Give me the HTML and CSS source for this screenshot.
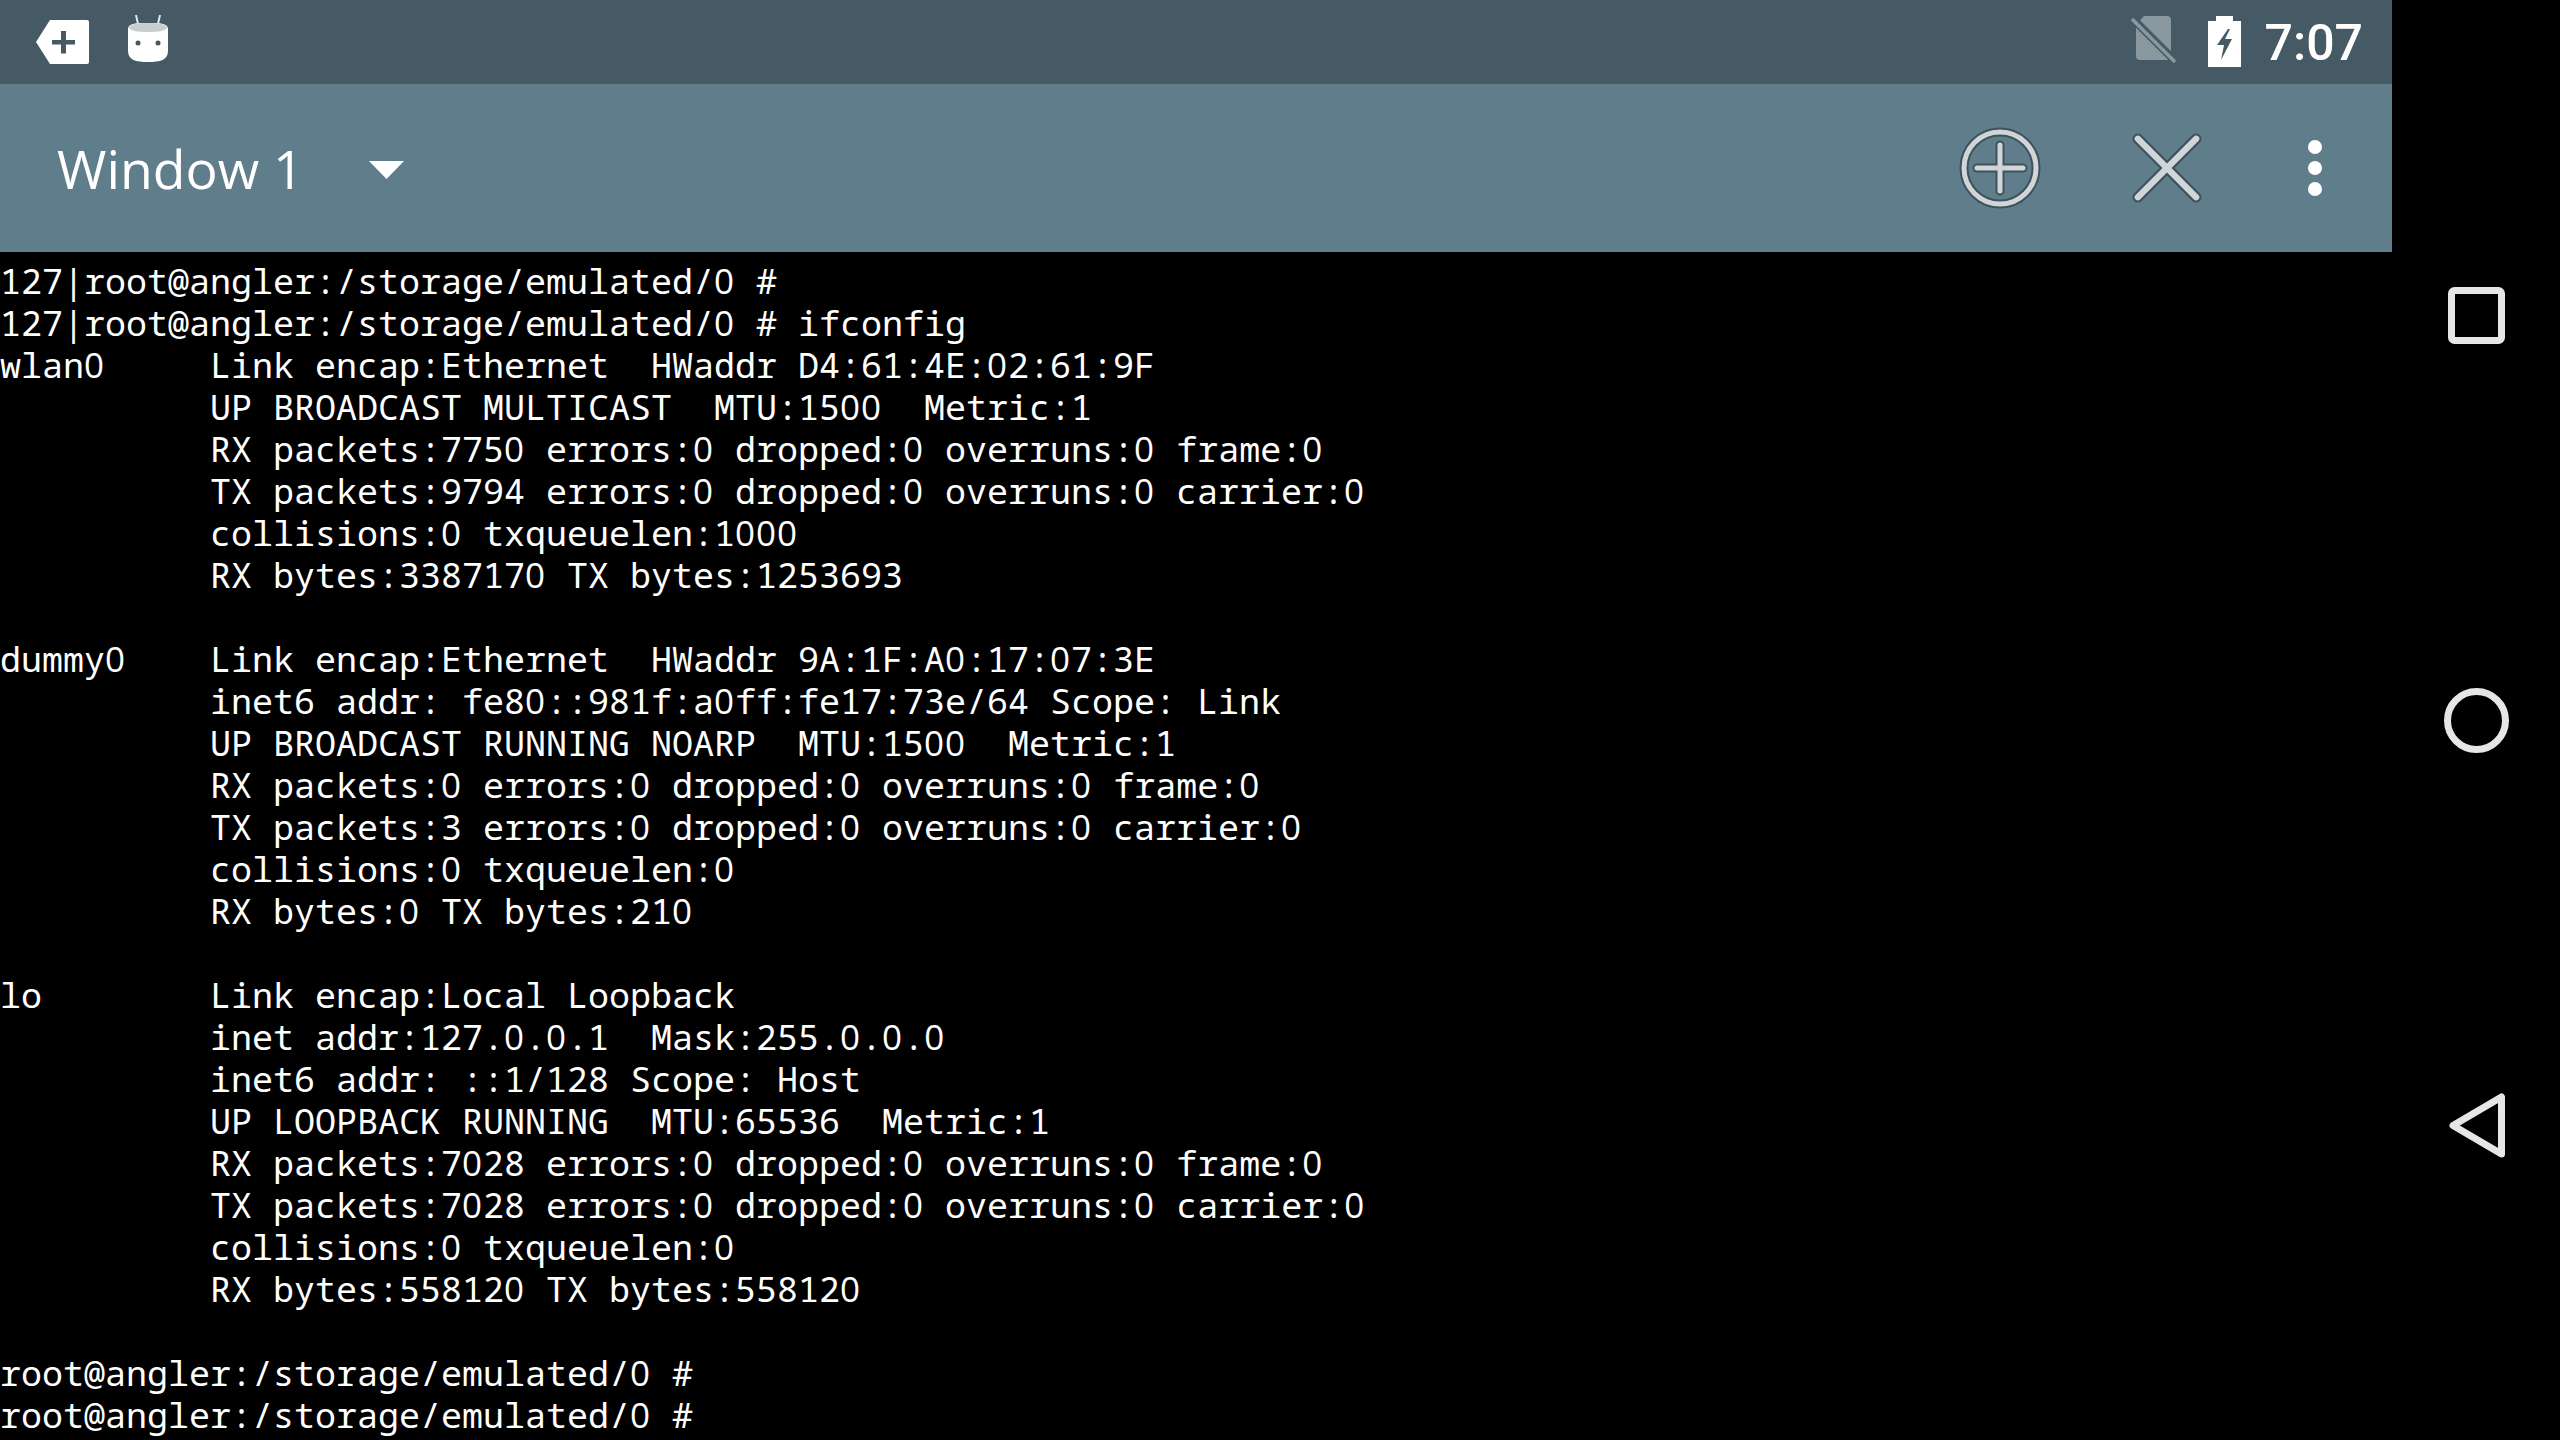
FILE: index.html
```html
<!DOCTYPE html>
<html lang="en">
<head>
<meta charset="utf-8">
<title>Terminal</title>
<link rel="stylesheet" href="styles.css">
</head>
<body>
<div class="screen">
  <div class="app">
    <div class="status">
      <div class="status-left">
        <svg class="ic-tag" viewBox="0 0 54 44"><path fill="#fff" d="M14 0H51a2 2 0 0 1 2 2V42a2 2 0 0 1-2 2H14L0 22Z"/><path fill="#455a64" d="M25 11h5v9h9v4.500h-9v9h-5v-9h-9V20h9Z"/></svg>
        <svg class="ic-droid" viewBox="0 0 42 48"><path fill="none" stroke="#e6e6e6" stroke-width="2" d="M9 0l2 9M33 0l-2 9"/><path fill="#fff" d="M1 14C1 8 10 8 21 8s20 0 20 6V36c0 9-8 11-20 11S1 45 1 36Z"/><path fill="#c8cdd0" d="M2 13c0-4 8-5 19-5s19 1 19 5c-2 3-9 4-19 4S4 16 2 13Z"/><circle cx="11" cy="28" r="2.500" fill="#455a64"/><circle cx="31" cy="28" r="2.500" fill="#455a64"/></svg>
      </div>
      <div class="status-right">
        <svg class="ic-sim" viewBox="0 0 46 48"><path fill="#8a989f" d="M13 0H36a4 4 0 0 1 4 4V40a4 4 0 0 1-4 4H9a4 4 0 0 1-4-4V9Z"/><path stroke="#455a64" stroke-width="8" d="M-2 -1 46 47"/><path stroke="#8a989f" stroke-width="3.500" d="M1 3 44 46"/></svg>
        <svg class="ic-batt" viewBox="0 0 33 51"><path fill="#fff" d="M8 0H25V5H33V51H0V5H8Z"/><path fill="#455a64" d="M20 13 9 29h7l-3 15 11-21h-7l5-10Z"/></svg>
        <span class="clock">7:07</span>
      </div>
    </div>
    <div class="toolbar">
      <div class="title-group">
        <span class="title">Window 1</span>
        <svg class="ic-caret" viewBox="0 0 36 20"><path fill="#fff" d="M0 0H35L17.500 18Z"/></svg>
      </div>
      <div class="actions">
        <svg class="ic-add" viewBox="0 0 84 84"><g fill="none" stroke-linecap="round"><g stroke="#3f525c" stroke-width="9"><circle cx="42" cy="42" r="36"/><path d="M19 42H65M42 19V65"/></g><g stroke="#d0d5d8" stroke-width="5"><circle cx="42" cy="42" r="36"/><path d="M19 42H65M42 19V65"/></g></g></svg>
        <svg class="ic-close" viewBox="0 0 72 72"><g stroke-linecap="round" fill="none"><path stroke="#3f525c" stroke-width="11" d="M6 6 66 66M66 6 6 66"/><path stroke="#d0d5d8" stroke-width="6.500" d="M6 6 66 66M66 6 6 66"/></g></svg>
        <svg class="ic-more" viewBox="0 0 16 64"><circle cx="8" cy="11" r="7" fill="#fff"/><circle cx="8" cy="32" r="7" fill="#fff"/><circle cx="8" cy="53" r="7" fill="#fff"/></svg>
      </div>
    </div>
    <div class="terminal">
      <div class="line">127|root@angler:/storage/emulated/<b>0</b> #</div>
      <div class="line">127|root@angler:/storage/emulated/<b>0</b> # ifconfig</div>
      <div class="line">wlan<b>0</b>     Link encap:Ethernet  HWaddr D4:61:4E:<b>0</b>2:61:9F</div>
      <div class="line">          UP BROADCAST MULTICAST  MTU:15<b>00</b>  Metric:1</div>
      <div class="line">          RX packets:775<b>0</b> errors:<b>0</b> dropped:<b>0</b> overruns:<b>0</b> frame:<b>0</b></div>
      <div class="line">          TX packets:9794 errors:<b>0</b> dropped:<b>0</b> overruns:<b>0</b> carrier:<b>0</b></div>
      <div class="line">          collisions:<b>0</b> txqueuelen:1<b>000</b></div>
      <div class="line">          RX bytes:338717<b>0</b> TX bytes:1253693</div>
      <div class="line"></div>
      <div class="line">dummy<b>0</b>    Link encap:Ethernet  HWaddr 9A:1F:A<b>0</b>:17:<b>0</b>7:3E</div>
      <div class="line">          inet6 addr: fe8<b>0</b>::981f:a<b>0</b>ff:fe17:73e/64 Scope: Link</div>
      <div class="line">          UP BROADCAST RUNNING NOARP  MTU:15<b>00</b>  Metric:1</div>
      <div class="line">          RX packets:<b>0</b> errors:<b>0</b> dropped:<b>0</b> overruns:<b>0</b> frame:<b>0</b></div>
      <div class="line">          TX packets:3 errors:<b>0</b> dropped:<b>0</b> overruns:<b>0</b> carrier:<b>0</b></div>
      <div class="line">          collisions:<b>0</b> txqueuelen:<b>0</b></div>
      <div class="line">          RX bytes:<b>0</b> TX bytes:21<b>0</b></div>
      <div class="line"></div>
      <div class="line">lo        Link encap:Local Loopback</div>
      <div class="line">          inet addr:127.<b>0</b>.<b>0</b>.1  Mask:255.<b>0</b>.<b>0</b>.<b>0</b></div>
      <div class="line">          inet6 addr: ::1/128 Scope: Host</div>
      <div class="line">          UP LOOPBACK RUNNING  MTU:65536  Metric:1</div>
      <div class="line">          RX packets:7<b>0</b>28 errors:<b>0</b> dropped:<b>0</b> overruns:<b>0</b> frame:<b>0</b></div>
      <div class="line">          TX packets:7<b>0</b>28 errors:<b>0</b> dropped:<b>0</b> overruns:<b>0</b> carrier:<b>0</b></div>
      <div class="line">          collisions:<b>0</b> txqueuelen:<b>0</b></div>
      <div class="line">          RX bytes:55812<b>0</b> TX bytes:55812<b>0</b></div>
      <div class="line"></div>
      <div class="line">root@angler:/storage/emulated/<b>0</b> #</div>
      <div class="line">root@angler:/storage/emulated/<b>0</b> #</div>
    </div>
  </div>
  <div class="navbar">
    <svg class="ic-recent" viewBox="0 0 57 57"><rect x="3.500" y="3.500" width="50" height="50" rx="3" fill="none" stroke="#e6e6e6" stroke-width="7"/></svg>
    <svg class="ic-home" viewBox="0 0 65 65"><circle cx="32.500" cy="32.500" r="29" fill="none" stroke="#e6e6e6" stroke-width="7"/></svg>
    <svg class="ic-back" viewBox="0 0 56 65"><path d="M4 32.500 52.500 4V61Z" fill="none" stroke="#e6e6e6" stroke-width="7" stroke-linejoin="round"/></svg>
  </div>
</div>
</body>
</html>
```
FILE: styles.css
```css
* { box-sizing: border-box; }
html, body { margin: 0; padding: 0; background: #000; }
.screen { width: 2560px; height: 1440px; display: flex; overflow: hidden; background: #000; }
.app { width: 2392px; display: flex; flex-direction: column; flex: none; }
.status { height: 84px; background: #455a64; display: flex; align-items: center; justify-content: space-between; padding: 0 29px 0 36px; flex: none; }
.status-left { display: flex; align-items: center; gap: 37px; }
.status-right { display: flex; align-items: center; }
.ic-tag { width: 54px; height: 44px; display: block; }
.ic-droid { width: 42px; height: 48px; display: block; margin-top: -6px; }
.ic-sim { width: 46px; height: 48px; display: block; margin-right: 31px; margin-top: -4px; }
.ic-batt { width: 33px; height: 51px; display: block; margin-right: 24px; margin-top: -2px; }
.clock { font-family: "Roboto", sans-serif; font-size: 50px; font-weight: 500; color: #fff; line-height: 84px; margin-top: 2px; }
.toolbar { height: 168px; background: #607d8b; display: flex; align-items: center; justify-content: space-between; padding: 0 69px 0 57px; flex: none; }
.title-group { display: flex; align-items: center; gap: 65px; }
.title { font-family: "Open Sans", sans-serif; font-size: 53.500px; color: #fff; line-height: 1; margin-top: 2px; }
.ic-caret { width: 36px; height: 20px; display: block; margin-top: 6px; }
.actions { display: flex; align-items: center; }
.ic-add { width: 84px; height: 84px; display: block; margin-right: 90px; }
.ic-close { width: 70px; height: 70px; display: block; margin-right: 105px; }
.ic-more { width: 16px; height: 64px; display: block; }
.terminal { flex: 1; padding: 8px 0 0; background: #000; color: #fff; font-family: "Noto Sans Mono", "DejaVu Sans Mono", monospace; font-size: 35px; line-height: 42px; overflow: hidden; }
.line { white-space: pre; height: 42px; }
.line b { font-family: "Open Sans", sans-serif; font-weight: 400; letter-spacing: 0.990px; }
.navbar { flex: 1; display: flex; flex-direction: column; align-items: center; padding-left: 1px; }
.ic-recent { width: 57px; height: 57px; display: block; margin-top: 287px; flex: none; }
.ic-home { width: 65px; height: 65px; display: block; margin-top: 344px; flex: none; }
.ic-back { width: 56px; height: 65px; display: block; margin-top: 340px; flex: none; }
```
